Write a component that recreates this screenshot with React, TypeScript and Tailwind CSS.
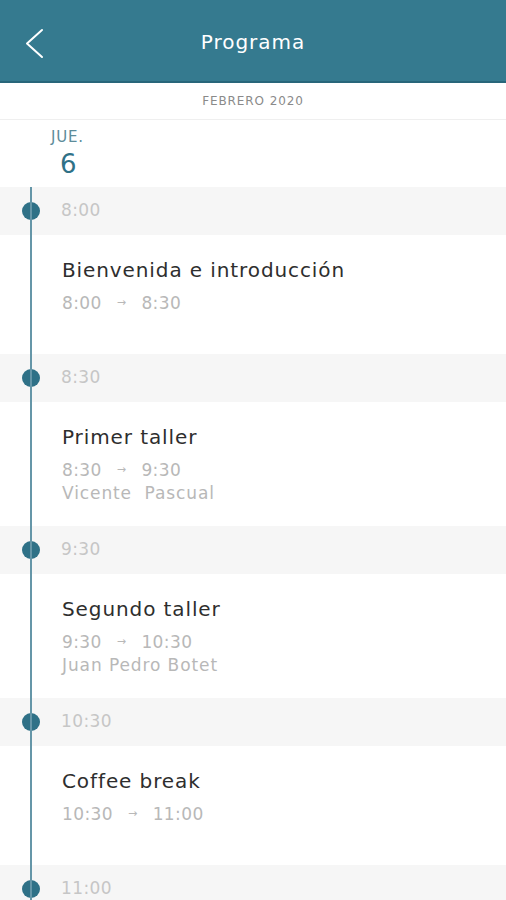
type Item = {
	start: string;
	end: string;
	title: string;
	speaker?: string;
};

const items: Item[] = [
	{ start: "8:00", end: "8:30", title: "Bienvenida e introducción" },
	{ start: "8:30", end: "9:30", title: "Primer taller", speaker: "Vicente  Pascual" },
	{ start: "9:30", end: "10:30", title: "Segundo taller", speaker: "Juan Pedro Botet" },
	{ start: "10:30", end: "11:00", title: "Coffee break" },
];

const font = { fontFamily: '"DejaVu Sans", "Noto Sans", sans-serif' };

function SlotHeader({ time }: { time: string }) {
	return (
		<div className="relative flex h-[48px] items-center bg-[#f6f6f6] pl-[61px]">
			<span className="absolute left-[22px] top-1/2 h-[18px] w-[18px] -translate-y-1/2 rounded-full bg-[#2f7187]" />
			<span className="text-[17px] tracking-[0.4px] text-[#c6c6c6]">{time}</span>
		</div>
	);
}

function Card({ item }: { item: Item }) {
	return (
		<div className={`bg-white pl-[62px] pt-[22px] ${item.speaker ? "h-[124px]" : "h-[119px]"}`}>
			<div className="text-[20px] leading-[26px] tracking-[0.9px] text-[#2e2e2e]">{item.title}</div>
			<div className="mt-[9px] flex items-center text-[17px] leading-[22px] tracking-[0.4px] text-[#b8b8b8]">
				<span>{item.start}</span>
				<span className="mx-[15px] text-[11px]">→</span>
				<span>{item.end}</span>
			</div>
			{item.speaker && (
				<div className="whitespace-pre text-[17px] leading-[24px] tracking-[0.9px] text-[#b8b8b8]">{item.speaker}</div>
			)}
		</div>
	);
}

export default function App() {
	return (
		<div className="h-[900px] w-[506px] overflow-hidden bg-white" style={font}>
			<header className="relative flex h-[83px] items-center justify-center border-b-2 border-[#28667a] bg-[#357a8f] pt-[3px]">
				<svg className="absolute left-[24px] top-[28px]" width="22" height="32" viewBox="0 0 22 32" fill="none">
					<path d="M18 2 L3 15.5 L18 29" stroke="white" strokeWidth="2" strokeLinecap="round" strokeLinejoin="round" />
				</svg>
				<h1 className="text-[20px] tracking-[1px] text-white">Programa</h1>
			</header>

			<div className="flex h-[37px] items-center justify-center border-b border-[#efefef] text-[12px] tracking-[0.9px] text-[#8a8a8a]">
				FEBRERO 2020
			</div>

			<div className="flex h-[67px] flex-col pl-[51px] pt-[8px]">
				<span className="text-[15px] leading-[18px] tracking-[0.8px] text-[#5d8c9a]">JUE.</span>
				<span className="pl-[9px] pt-[2px] text-[26px] leading-[32px] text-[#2f7187]">6</span>
			</div>

			<div className="relative">
				<div className="absolute bottom-0 left-[30px] top-0 z-10 w-[2px] bg-[#6596a8]" />
				{items.map((item) => (
					<div key={item.start}>
						<SlotHeader time={item.start} />
						<Card item={item} />
					</div>
				))}
				<SlotHeader time="11:00" />
			</div>
		</div>
	);
}
